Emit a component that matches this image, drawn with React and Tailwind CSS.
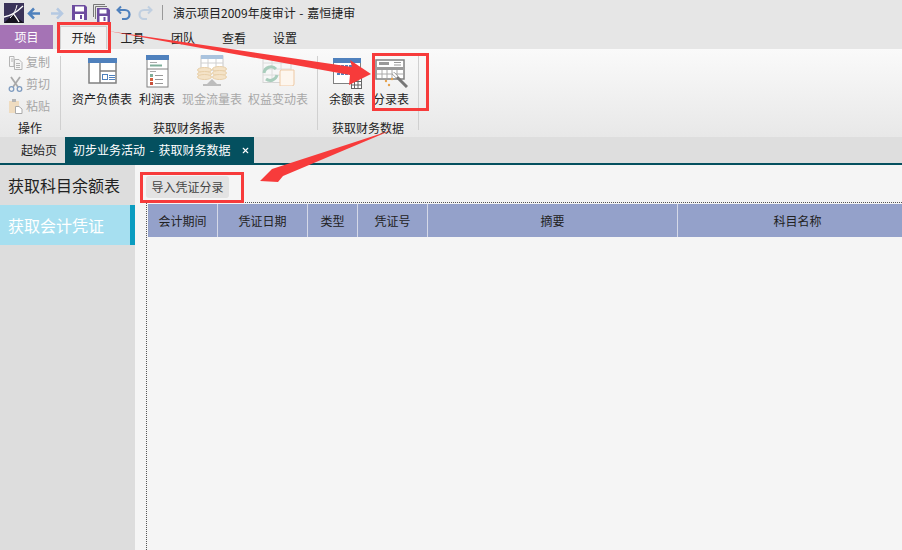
import { X } from 'lucide-react';

const font = { fontFamily: '"Noto Sans CJK SC", "Liberation Sans", sans-serif' };

function Logo() {
  return (
    <svg width="20" height="20" viewBox="0 0 20 20" fill="none" className="ml-[4px] shrink-0">
      <rect width="20" height="20" fill="#3a3358" />
      <path d="M0 20L9 11L20 20Z" fill="#16131f" />
      <path d="M0 14C6 13 13 9 19 3" stroke="#fff" strokeWidth="1.3" />
      <path d="M13 2C12 7 10 11 6 15" stroke="#fff" strokeWidth="1" />
      <path d="M9 10C11 13 13 15 15 19" stroke="#fff" strokeWidth="1.3" />
    </svg>
  );
}

function BackArrow({ color, flip }) {
  return (
    <svg width="14" height="13" viewBox="0 0 14 13" fill="none" className={flip ? 'scale-x-[-1]' : ''}>
      <path d="M7 1.500L2 6.500L7 11.500M2 6.500H13" stroke={color} strokeWidth="2.500" />
    </svg>
  );
}

function UndoArrow({ color, flip }) {
  return (
    <svg width="15" height="15" viewBox="0 0 15 15" fill="none" className={flip ? 'scale-x-[-1]' : ''}>
      <path d="M5 1.500L1.500 5L5 8.500" stroke={color} strokeWidth="2" />
      <path d="M2 5H9a4.500 4.500 0 0 1 0 9H6" stroke={color} strokeWidth="2.200" />
    </svg>
  );
}

function Floppy() {
  return (
    <svg width="15" height="15" viewBox="0 0 15 15" fill="none">
      <path d="M0 0H13L15 2V15H0Z" fill="#6d4c9f" />
      <rect x="3" y="1.500" width="9" height="5" fill="#fff" />
      <rect x="3" y="9" width="9" height="6" fill="#fff" />
      <rect x="8" y="10" width="2" height="4" fill="#6d4c9f" />
    </svg>
  );
}

function FloppyStack() {
  return (
    <svg width="17" height="18" viewBox="0 0 17 18" fill="none">
      <path d="M0.500 13V0.500H12" stroke="#777" />
      <path d="M2.500 15V2.500H14" stroke="#777" />
      <path d="M4 4H15L17 6V18H4Z" fill="#6d4c9f" />
      <rect x="6.500" y="5.500" width="7" height="4" fill="#fff" />
      <rect x="6.500" y="12" width="8" height="6" fill="#fff" />
      <rect x="10.500" y="13" width="2" height="4" fill="#6d4c9f" />
    </svg>
  );
}

function CopyGlyph() {
  return (
    <svg width="15" height="15" viewBox="0 0 15 15" fill="none" stroke="#b5b5b5">
      <path d="M1.500 1.500H6V11.500H1.500Z" />
      <path d="M6.500 4.500H11L14 7.500V14.500H6.500Z" fill="#f5f5f5" />
      <path d="M3 4H5M3 6H5M8 8.500H12M8 10.500H12M8 12.500H12" />
    </svg>
  );
}

function CutGlyph() {
  return (
    <svg width="15" height="16" viewBox="0 0 15 16" fill="none" stroke="#a8b2bf" strokeWidth="1.300">
      <path d="M3 1L10 11M12 1L5 11" stroke="#aaaaaa" strokeWidth="1.800" />
      <circle cx="3.500" cy="13" r="2.300" stroke="#7f9cc0" />
      <circle cx="11.500" cy="13" r="2.300" stroke="#7f9cc0" />
    </svg>
  );
}

function PasteGlyph() {
  return (
    <svg width="15" height="16" viewBox="0 0 15 16" fill="none">
      <rect x="1" y="3" width="10" height="12" fill="#efdcc0" />
      <rect x="4" y="1" width="4" height="3" fill="#b5b5b5" />
      <path d="M7.500 8.500H11L14 11V15.500H7.500Z" fill="#fff" stroke="#aaaaaa" />
    </svg>
  );
}

// 资产负债表
function BalanceIcon() {
  return (
    <svg width="29" height="26" viewBox="0 0 29 26" fill="none" className="mt-[3px]">
      <rect x="1" y="1" width="27" height="24" fill="#fff" stroke="#808080" strokeWidth="1.500" />
      <rect x="0" y="0" width="29" height="5" fill="#4f81bd" />
      <path d="M12 5V25M12 13H28" stroke="#808080" strokeWidth="1.500" />
      <rect x="14.500" y="16.500" width="5" height="5" stroke="#4f81bd" />
      <path d="M21 17.500H27M21 19.500H27M21 21.500H27" stroke="#4f81bd" />
    </svg>
  );
}

// 利润表
function ProfitIcon() {
  return (
    <svg width="23" height="33" viewBox="0 0 23 33" fill="none">
      <rect x="1" y="1" width="21" height="31" fill="#fff" stroke="#808080" />
      <rect x="0" y="0" width="23" height="5" fill="#4f81bd" />
      <path d="M4 7.500H11" stroke="#aaa" />
      <path d="M4 10.500H16" stroke="#7fae9a" strokeWidth="2" />
      <path d="M1 14H22" stroke="#808080" />
      <path d="M4 16.500H10" stroke="#aaa" />
      <rect x="4" y="19" width="3" height="3" fill="#7fae9a" />
      <rect x="4" y="23" width="3" height="3" fill="#d9603c" />
      <rect x="4" y="27" width="3" height="3" fill="#c9503c" />
      <path d="M9 20.500H17M9 24.500H17M9 28.500H17" stroke="#999" />
    </svg>
  );
}

// 现金流量表 (disabled)
function CashIcon() {
  return (
    <svg width="30" height="32" viewBox="0 0 30 32" fill="none">
      <rect x="4" y="1" width="22" height="14" fill="#fff" stroke="#c8c8c8" />
      <rect x="4" y="0" width="22" height="4" fill="#a9c3de" />
      <path d="M11 4V15M19 4V15M4 8H26" stroke="#d0d0d0" />
      <ellipse cx="7.500" cy="15" rx="7" ry="2.500" fill="#f4e3c8" stroke="#e8cfa8" />
      <ellipse cx="7.500" cy="19" rx="7" ry="2.500" fill="#f4e3c8" stroke="#e8cfa8" />
      <ellipse cx="7.500" cy="22" rx="7" ry="2.500" fill="#f4e3c8" stroke="#e8cfa8" />
      <ellipse cx="22.500" cy="14" rx="7" ry="2.500" fill="#f4e3c8" stroke="#e8cfa8" />
      <ellipse cx="22.500" cy="18" rx="7" ry="2.500" fill="#f4e3c8" stroke="#e8cfa8" />
      <ellipse cx="22.500" cy="22" rx="7" ry="2.500" fill="#f4e3c8" stroke="#e8cfa8" />
      <path d="M15 24L10 29H20Z" fill="#bdbdbd" />
      <path d="M6 30H24" stroke="#bdbdbd" strokeWidth="2" />
    </svg>
  );
}

// 权益变动表 (disabled)
function EquityIcon() {
  return (
    <svg width="33" height="28" viewBox="0 0 33 28" fill="none" className="mt-[3px]">
      <rect x="1" y="0.500" width="28" height="24" fill="#f7f7f7" stroke="#d5d5d5" />
      <path d="M1 5H29M1 11H29M1 17H29M10 0V25M19 0V25" stroke="#dcdcdc" />
      <path d="M2 15a7 7 0 0 1 12-4" stroke="#a9cdbc" strokeWidth="3" />
      <path d="M15 17a7 7 0 0 1-11 4" stroke="#a9cdbc" strokeWidth="3" />
      <path d="M19 12H32V26a2 2 0 0 1-2 2H18V14a2 2 0 0 1 1-2Z" fill="#fdf6ee" stroke="#eec9a4" />
    </svg>
  );
}

// 余额表
function RemainIcon() {
  return (
    <svg width="29" height="31" viewBox="0 0 29 31" fill="none" className="mt-[3px]">
      <rect x="0.500" y="0.500" width="27" height="25" fill="#fff" stroke="#808080" />
      <rect x="0" y="0" width="28" height="5" fill="#4f81bd" />
      <path d="M4 8H24M4 12H24M4 16H24" stroke="#4f81bd" strokeWidth="2" strokeDasharray="3 1" />
      <rect x="18.500" y="19.500" width="10" height="11" fill="#fff" stroke="#666" />
      <path d="M18 23.500H28M18 27H28M21.500 20V31M25 20V31" stroke="#666" />
    </svg>
  );
}

// 分录表
function EntryIcon() {
  return (
    <svg width="34" height="33" viewBox="0 0 34 33" fill="none">
      <rect x="2" y="5" width="28" height="19" fill="#fff" stroke="#808080" strokeWidth="1.500" />
      <rect x="5" y="7" width="10" height="3" fill="#999" />
      <path d="M20 7.500H27M20 10H27" stroke="#999" />
      <rect x="3" y="12" width="26" height="3" fill="#9a9a9a" />
      <path d="M8 15V23M13 15V23M18 15V23M23 15V23M3 19H29" stroke="#aaa" />
      <path d="M19 18L33 32" stroke="#777" strokeWidth="3" />
      <path d="M19 18L23 22" stroke="#fff" strokeWidth="2" />
      <circle cx="12" cy="26" r="1.200" fill="#e6a14c" />
      <circle cx="18" cy="24" r="1.200" fill="#e6a14c" />
      <circle cx="15" cy="30" r="1.200" fill="#e6a14c" />
    </svg>
  );
}

function RibbonButton({ icon, label, disabled, width }) {
  return (
    <div className={`flex flex-col items-center shrink-0 ${width}`}>
      <div className="h-[34px] flex items-start justify-center">{icon}</div>
      <div className={`mt-[2px] text-[12px] leading-[16px] whitespace-nowrap ${disabled ? 'text-[#a8a8a8]' : 'text-[#222]'}`}>{label}</div>
    </div>
  );
}

function SmallAction({ icon, label }) {
  return (
    <div className="h-[22px] flex items-center gap-[3px] pl-[8px] text-[12px] text-[#a6a6a6]">
      {icon}
      <span>{label}</span>
    </div>
  );
}

const columns = [
  ['会计期间', 'w-[70px]'],
  ['凭证日期', 'w-[90px]'],
  ['类型', 'w-[50px]'],
  ['凭证号', 'w-[70px]'],
  ['摘要', 'w-[250px]'],
  ['科目名称', 'w-[240px]'],
];

export default function App() {
  return (
    <div className="relative w-[902px] h-[550px] overflow-hidden bg-[#f5f5f5] text-[#222]" style={font}>
      {/* title bar */}
      <div className="h-[25px] bg-[#e6e6e6] flex items-center">
        <Logo />
        <div className="ml-[3px] mt-[1px]"><BackArrow color="#4f81bd" /></div>
        <div className="ml-[9px] mt-[1px]"><BackArrow color="#b5c9e2" flip /></div>
        <div className="ml-[8px]"><Floppy /></div>
        <div className="ml-[6px]"><FloppyStack /></div>
        <div className="ml-[6px]"><UndoArrow color="#4f81bd" /></div>
        <div className="ml-[7px]"><UndoArrow color="#c0cfe0" flip /></div>
        <div className="w-px h-[15px] bg-[#999] ml-[9px]" />
        <div className="ml-[10px] mt-[1px] text-[12px] leading-none [word-spacing:1px]">演示项目2009年度审计 - 嘉恒捷审</div>
      </div>

      {/* menu tabs */}
      <div className="h-[24px] bg-[#e6e6e6] flex items-end text-[12px]">
        <div className="w-[53px] h-[24px] bg-[#a573b5] text-white flex items-center justify-center">项目</div>
        <div className="w-[47px] h-[23px] ml-[7px] bg-[#f3f3f3] border border-b-0 border-[#d0d0d0] flex items-center justify-center">开始</div>
        <div className="w-[51px] h-[23px] flex items-center justify-center">工具</div>
        <div className="w-[50px] h-[23px] flex items-center justify-center">团队</div>
        <div className="w-[52px] h-[23px] flex items-center justify-center">查看</div>
        <div className="w-[50px] h-[23px] flex items-center justify-center">设置</div>
      </div>

      {/* ribbon */}
      <div className="h-[88px] bg-gradient-to-b from-[#fafafa] to-[#e8e8e8] flex">
        <div className="w-[60px] shrink-0 flex flex-col pt-[2px]">
          <SmallAction icon={<CopyGlyph />} label="复制" />
          <SmallAction icon={<CutGlyph />} label="剪切" />
          <SmallAction icon={<PasteGlyph />} label="粘贴" />
          <div className="mt-[3px] text-center text-[12px] leading-[16px]">操作</div>
        </div>
        <div className="w-px h-[74px] mt-[7px] bg-[#d0d0d0] shrink-0" />
        <div className="w-[256px] shrink-0 flex flex-col pt-[6px]">
          <div className="flex h-[54px] pl-[10px]">
            <RibbonButton width="w-[62px]" icon={<BalanceIcon />} label="资产负债表" />
            <RibbonButton width="w-[48px]" icon={<ProfitIcon />} label="利润表" />
            <RibbonButton width="w-[62px]" icon={<CashIcon />} label="现金流量表" disabled />
            <RibbonButton width="w-[70px]" icon={<EquityIcon />} label="权益变动表" disabled />
          </div>
          <div className="mt-[11px] text-center text-[12px] leading-[16px]">获取财务报表</div>
        </div>
        <div className="w-px h-[74px] mt-[7px] bg-[#d0d0d0] shrink-0" />
        <div className="w-[100px] shrink-0 flex flex-col pt-[6px]">
          <div className="flex h-[54px] pl-[7px]">
            <RibbonButton width="w-[44px]" icon={<RemainIcon />} label="余额表" />
            <RibbonButton width="w-[44px]" icon={<EntryIcon />} label="分录表" />
          </div>
          <div className="mt-[11px] text-center text-[12px] leading-[16px]">获取财务数据</div>
        </div>
        <div className="w-px h-[74px] mt-[7px] bg-[#d0d0d0] shrink-0" />
      </div>

      {/* page tabs */}
      <div className="h-[28px] bg-[#dedede] border-b-2 border-[#04505f] flex text-[12px]">
        <div className="w-[65px] flex items-center justify-end pr-[8px]">起始页</div>
        <div className="w-[189px] bg-[#04505f] text-white flex items-center pl-[8px]">
          <span className="[word-spacing:2px]">初步业务活动 - 获取财务数据</span>
          <X size={9} strokeWidth={3} className="ml-[10px]" />
        </div>
      </div>

      {/* body */}
      <div className="flex h-[385px]">
        <div className="w-[135px] shrink-0 bg-[#dddddd]">
          <div className="h-[40px] flex items-center pl-[8px] text-[16px]">获取科目余额表</div>
          <div className="h-[40px] flex items-center pl-[8px] text-[16px] text-white bg-[#a6dff0] border-r-[5px] border-[#0a9cc0]">获取会计凭证</div>
        </div>
        <div className="flex-1 min-w-0">
          <div className="h-[37px] pl-[11px] pt-[11px]">
            <div className="w-[83px] h-[22px] rounded-[3px] bg-[#e3e3e3] text-[12px] text-[#444] flex items-center justify-center">导入凭证分录</div>
          </div>
          <div className="ml-[11px] h-[348px] border-l border-t border-dotted border-[#555] pl-px pt-px">
            <div className="flex h-[33px] bg-[#94a1ca] text-[12px]">
              {columns.map(([name, w]) => (
                <div key={name} className={`${w} shrink-0 border-r border-[#d5d9e8] flex items-center justify-center`}>{name}</div>
              ))}
            </div>
          </div>
        </div>
      </div>

      {/* red annotations laid over the screenshot */}
      <div className="absolute left-[57px] top-[22px] w-[54px] h-[31px] border-[3px] border-[#f73b3b]" />
      <div className="absolute left-[372px] top-[53px] w-[57px] h-[58px] border-[3px] border-[#f73b3b]" />
      <div className="absolute left-[140px] top-[172px] w-[104px] h-[31px] border-[3px] border-[#f73b3b]" />
      <svg className="absolute left-0 top-0 pointer-events-none" width="902" height="550" viewBox="0 0 902 550" fill="none">
        <path d="M108 31L352 67L350 60L371 74L349 85L350 75Z" fill="#f73b3b" />
        <path d="M392 130L283 176L278 182L260 181L272 169Z" fill="#f73b3b" />
      </svg>
    </div>
  );
}
